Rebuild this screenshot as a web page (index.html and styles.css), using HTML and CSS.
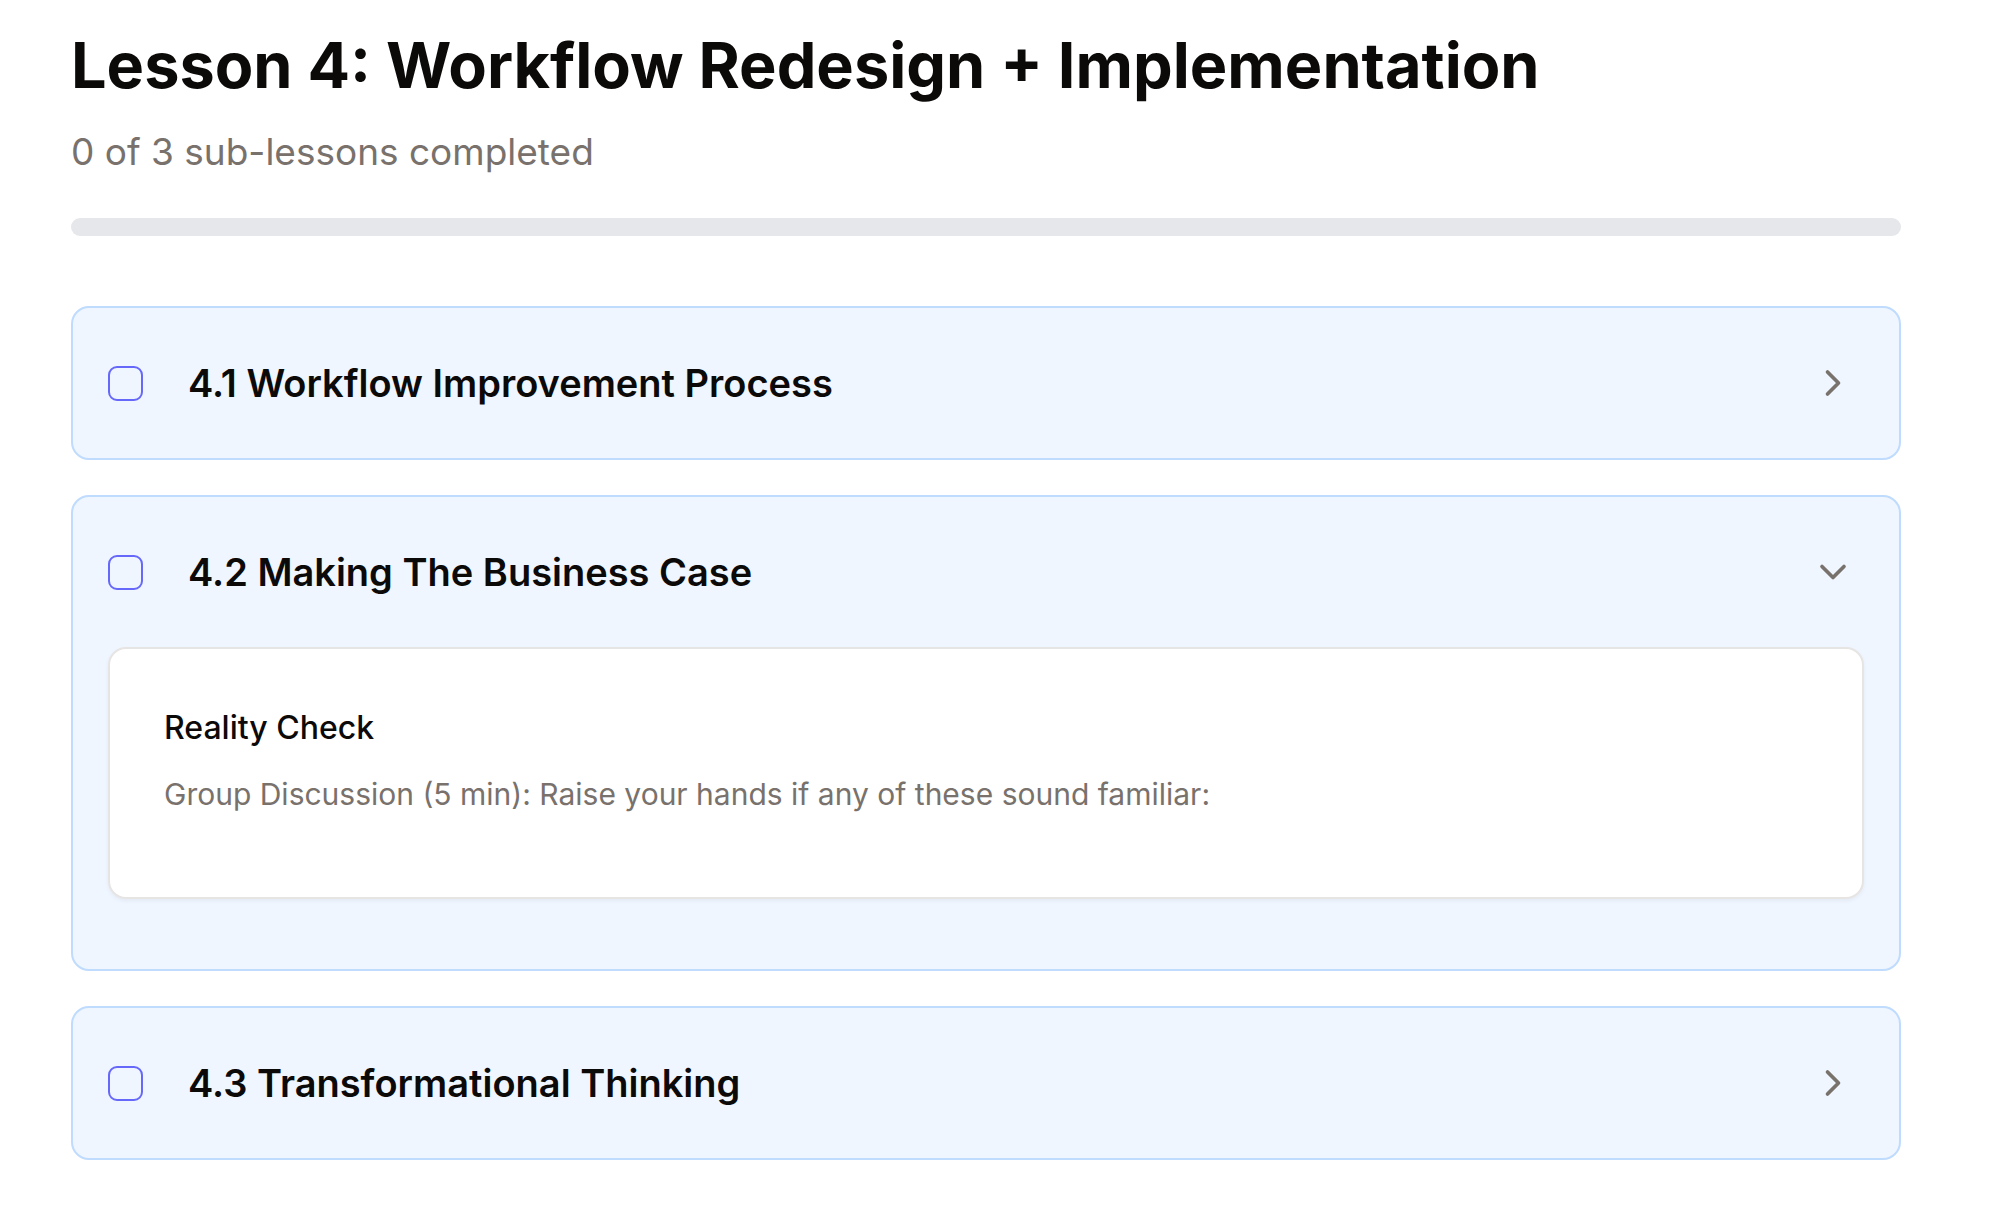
FILE: index.html
```html
<!DOCTYPE html>
<html lang="en">
<head>
<meta charset="utf-8">
<meta name="viewport" content="width=device-width, initial-scale=1">
<title>Lesson 4: Workflow Redesign + Implementation</title>
<link rel="stylesheet" href="styles.css">
</head>
<body>
<main class="lesson">
  <header class="lesson-header">
    <h1 class="lesson-title">Lesson 4: Workflow Redesign + Implementation</h1>
    <p class="lesson-status">0 of 3 sub-lessons completed</p>
    <div class="progress" role="progressbar" aria-label="Lesson progress" aria-valuemin="0" aria-valuemax="3" aria-valuenow="0"></div>
  </header>
  <div class="sections">
    <section class="section">
      <div class="section-row">
        <input class="check" type="checkbox" id="done-1" aria-labelledby="title-1">
        <button class="toggle" type="button" aria-expanded="false">
          <span class="section-title" id="title-1">4.1 Workflow Improvement Process</span>
          <svg class="chevron" viewBox="0 0 24 24" aria-hidden="true"><path d="m9 18 6-6-6-6"/></svg>
        </button>
      </div>
    </section>
    <section class="section">
      <div class="section-row">
        <input class="check" type="checkbox" id="done-2" aria-labelledby="title-2">
        <button class="toggle" type="button" aria-expanded="true">
          <span class="section-title" id="title-2">4.2 Making The Business Case</span>
          <svg class="chevron" viewBox="0 0 24 24" aria-hidden="true"><path d="m6 9 6 6 6-6"/></svg>
        </button>
      </div>
      <div class="section-body">
        <article class="card">
          <h2 class="card-title">Reality Check</h2>
          <p class="card-text">Group Discussion (5 min): Raise your hands if any of these sound familiar:</p>
        </article>
      </div>
    </section>
    <section class="section">
      <div class="section-row">
        <input class="check" type="checkbox" id="done-3" aria-labelledby="title-3">
        <button class="toggle" type="button" aria-expanded="false">
          <span class="section-title" id="title-3">4.3 Transformational Thinking</span>
          <svg class="chevron" viewBox="0 0 24 24" aria-hidden="true"><path d="m9 18 6-6-6-6"/></svg>
        </button>
      </div>
    </section>
  </div>
</main>
</body>
</html>
```

FILE: styles.css
```css
* { box-sizing: border-box; }

body {
  margin: 0;
  background: #fff;
  color: #0c0a09;
  font-family: Inter, "Liberation Sans", sans-serif;
}

h1, h2, p { margin: 0; }

.lesson { padding: 27px 107px 68px 71px; }

.lesson-title {
  font-size: 63px;
  line-height: 76px;
  font-weight: 700;
}

.lesson-status {
  margin-top: 21px;
  color: #78716c;
  font-size: 37px;
  line-height: 56px;
}

.progress {
  height: 18px;
  margin-top: 38px;
  border-radius: 9px;
  background: #e5e7eb;
}

.sections {
  display: flex;
  flex-direction: column;
  gap: 35px;
  margin-top: 70px;
}

.section {
  border: 2px solid #bfdbfe;
  border-radius: 18px;
  background: #eff6ff;
}

.section-row {
  display: flex;
  align-items: center;
  gap: 45px;
  min-height: 150px;
  padding: 0 35px;
}

.check {
  appearance: none;
  flex: none;
  width: 35px;
  height: 35px;
  margin: 0;
  border: 2px solid #6668fa;
  border-radius: 9px;
}

.toggle {
  display: flex;
  flex: 1;
  align-items: center;
  justify-content: space-between;
  padding: 0 9px 0 0;
  border: 0;
  background: none;
  color: inherit;
  font: 600 38px/56px Inter, "Liberation Sans", sans-serif;
  text-align: left;
}

.chevron {
  flex: none;
  width: 44px;
  height: 44px;
  fill: none;
  stroke: #78716c;
  stroke-width: 2;
  stroke-linecap: round;
  stroke-linejoin: round;
}

.section-body { padding: 0 35px 70px; }

.card {
  padding: 52px 54px 78px;
  border: 2px solid #e7e5e4;
  border-radius: 18px;
  background: #fff;
  box-shadow: 0 2px 4px rgb(0 0 0 / 5%);
}

.card-title {
  font-size: 32px;
  line-height: 54px;
  font-weight: 500;
}

.card-text {
  margin-top: 14px;
  color: #78716c;
  font-size: 30px;
  line-height: 50px;
}
```
